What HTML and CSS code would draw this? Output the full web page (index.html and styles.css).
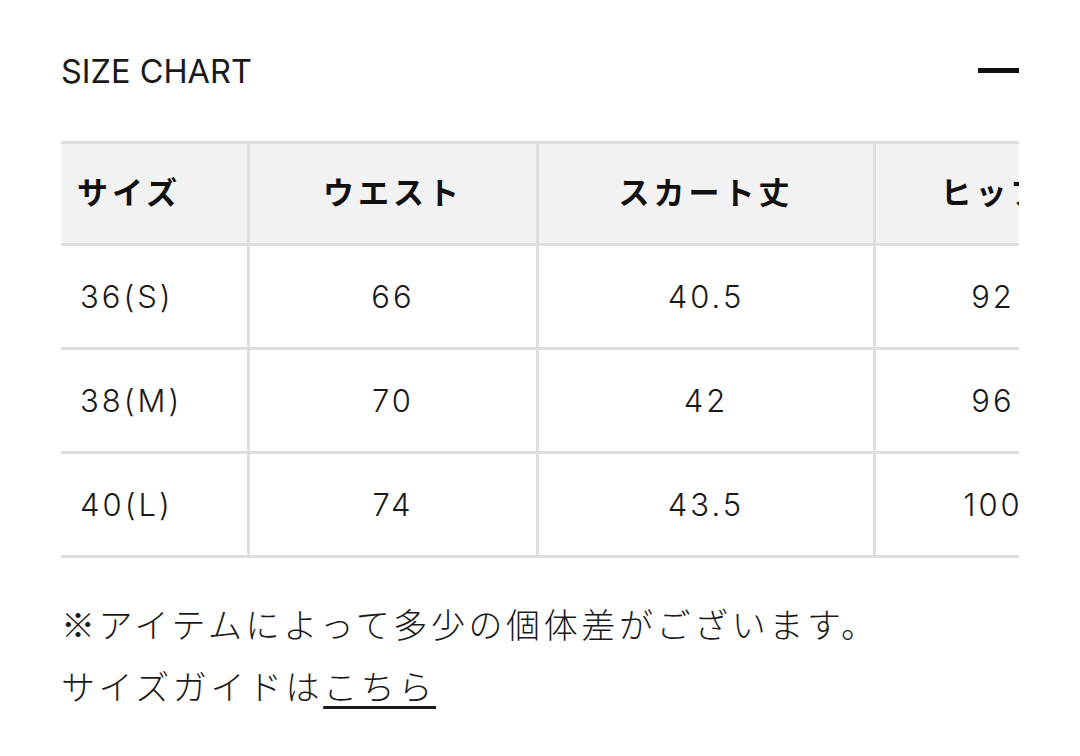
FILE: index.html
```html
<!DOCTYPE html>
<html lang="ja">
<head>
<meta charset="utf-8">
<title>Size chart</title>
<link rel="stylesheet" href="styles.css">
</head>
<body>
<div class="page">
  <div class="title-row">
    <h2 class="title">SIZE CHART</h2>
    <span class="minus" aria-label="close"></span>
  </div>
  <div class="table-wrap">
    <table class="chart">
      <colgroup>
        <col class="c1"><col class="c2"><col class="c3"><col class="c4">
      </colgroup>
      <thead>
        <tr>
          <th class="first">サイズ</th>
          <th>ウエスト</th>
          <th>スカート丈</th>
          <th>ヒップ</th>
        </tr>
      </thead>
      <tbody>
        <tr><td class="first">36(S)</td><td>66</td><td>40.5</td><td>92</td></tr>
        <tr><td class="first">38(M)</td><td>70</td><td>42</td><td>96</td></tr>
        <tr><td class="first">40(L)</td><td>74</td><td>43.5</td><td>100</td></tr>
      </tbody>
    </table>
  </div>
  <p class="note">※アイテムによって多少の個体差がございます。</p>
  <p class="note">サイズガイドは<a class="link" href="#">こちら</a></p>
</div>
</body>
</html>
```

FILE: styles.css
```css
html, body {
  margin: 0;
  padding: 0;
  background: #ffffff;
}
body {
  font-family: "Inter", "Noto Sans CJK JP", sans-serif;
  color: #1a1a1a;
}
.page {
  padding: 43px 61px 0 61px;
}
.title-row {
  display: flex;
  align-items: center;
  justify-content: space-between;
  height: 56px;
}
.title {
  margin: 0;
  font-family: "Inter", sans-serif;
  font-weight: 400;
  font-size: 32.5px;
  letter-spacing: 0;
  color: #1a1a1a;
}
.minus {
  display: block;
  width: 41px;
  height: 5px;
  background: #111;
  margin-top: -2px;
}
.table-wrap {
  margin-top: 42px;
  overflow: hidden;
  width: 958px;
}
.chart {
  table-layout: fixed;
  border-collapse: separate;
  border-spacing: 0;
  width: 1049px;
}
.c1 { width: 186px; }
.c2 { width: 289px; }
.c3 { width: 337px; }
.c4 { width: 237px; }
.chart th,
.chart td {
  border-bottom: 3px solid #dedede;
  border-left: 3px solid #dedede;
  text-align: center;
  padding: 0;
  white-space: nowrap;
}
.chart th.first,
.chart td.first {
  border-left: none;
  text-align: left;
}
.chart th {
  border-top: 3px solid #dedede;
  background: #f2f2f2;
  height: 93px;
  padding-bottom: 6px;
  font-family: "Noto Sans CJK JP", sans-serif;
  font-weight: 700;
  font-size: 31px;
  letter-spacing: 4px;
  color: #111;
}
.chart th.first {
  padding-left: 16px;
}
.chart td {
  height: 101px;
  font-family: "Inter", sans-serif;
  font-weight: 300;
  font-size: 31px;
  letter-spacing: 3px;
  color: #1a1a1a;
}
.chart td.first {
  padding-left: 19px;
}
.note {
  margin: 0;
  font-family: "Noto Sans CJK JP", sans-serif;
  font-weight: 300;
  font-size: 34px;
  letter-spacing: 3.6px;
  line-height: 62px;
  color: #1a1a1a;
}
.note:first-of-type {
  margin-top: 35px;
}
.link {
  color: inherit;
  text-decoration: underline;
  text-decoration-thickness: 3px;
  text-underline-offset: 6px;
}
```
